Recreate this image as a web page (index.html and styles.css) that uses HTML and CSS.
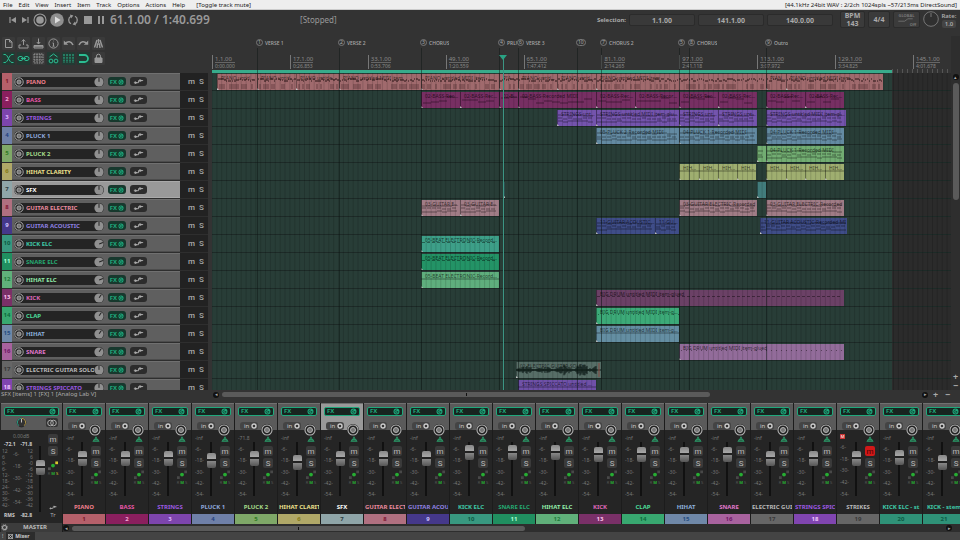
FILE: index.html
```
<!DOCTYPE html>
<html lang="en">
<head>
    <meta charset="UTF-8">
    <meta name="viewport" content="width=device-width, initial-scale=1.0">
    <title>Mixer</title>
    <link rel="stylesheet" href="styles.css">
</head>
<body>
    <svg class="sprite" aria-hidden="true">
        <symbol id="i-prev" viewBox="0 0 12 12"><path d="M3 3v6" stroke="#999" stroke-width="1.2"/><path d="M9 3v6L4 6z" fill="#999"/></symbol>
        <symbol id="i-next" viewBox="0 0 12 12"><path d="M9 3v6" stroke="#999" stroke-width="1.2"/><path d="M3 3v6l5-3z" fill="#999"/></symbol>
        <symbol id="i-rec" viewBox="0 0 14 14"><circle cx="7" cy="7" r="6" fill="none" stroke="#999" stroke-width="1.1"/><circle cx="7" cy="7" r="3.8" fill="#999"/></symbol>
        <symbol id="i-play" viewBox="0 0 14 14"><circle cx="7" cy="7" r="6.8" fill="#8f8f8f"/><path d="M5 3.6v6.8L10.6 7z" fill="#ddd"/></symbol>
        <symbol id="i-loop" viewBox="0 0 12 12"><g fill="none" stroke="#999" stroke-width="1.3"><path d="M4 9.8A4.3 4.3 0 0 1 4 2.2"/><path d="M8 2.2a4.3 4.3 0 0 1 0 7.6"/></g><path d="M3 .6l3.4 1L4 4.4zM9 11.4l-3.4-1L8 7.6z" fill="#999"/></symbol>
        <symbol id="i-stop" viewBox="0 0 12 12"><path d="M2 2h8v8H2z" fill="#999"/></symbol>
        <symbol id="i-pause" viewBox="0 0 12 12"><path d="M3 2h2v8H3zM7 2h2v8H7z" fill="#999"/></symbol>
        <symbol id="i-new" viewBox="0 0 13 13"><path d="M3.5 2.5h4L10 5v5.5H3.5zM7.5 2.5V5H10"/></symbol>
        <symbol id="i-open" viewBox="0 0 13 13"><path d="M6.5 8V3M4.8 4.5l1.7-2 1.7 2M4 8H2v3h9V8H9"/></symbol>
        <symbol id="i-save" viewBox="0 0 13 13"><path d="M6.5 1.5v5M4.8 5l1.7 2 1.7-2M2 8.5h9V11H2zM2 9.7h9"/></symbol>
        <symbol id="i-info" viewBox="0 0 13 13"><circle cx="6.5" cy="6.5" r="4.6"/><path d="M6.5 6v3.2M5.5 6h1M5.5 9.2h2M6.2 4h.6"/></symbol>
        <symbol id="i-undo" viewBox="0 0 13 13"><path d="M3 6.5C6 3.8 9 4 11 8" stroke-width="1.6"/><path d="M1.8 3.5v4.2h4.4z" fill="currentColor" stroke="none"/></symbol>
        <symbol id="i-redo" viewBox="0 0 13 13"><path d="M10 6.5C7 3.8 4 4 2 8" stroke-width="1.6"/><path d="M11.2 3.5v4.2H6.8z" fill="currentColor" stroke="none"/></symbol>
        <symbol id="i-metro" viewBox="0 0 13 13"><path d="M5 3L2.5 10.5M8 3l2.5 7.5M6.5 2v4M5 11l.5-4h2l.5 4" stroke-width="1.4"/></symbol>
        <symbol id="i-cross" viewBox="0 0 13 13"><path d="M1.5 2.5H3c3 0 4 8 7 8h1.5M1.5 10.5H3c3 0 4-8 7-8h1.5"/></symbol>
        <symbol id="i-link" viewBox="0 0 13 13"><rect x="1" y="4.5" width="5" height="4" rx="2"/><rect x="7" y="4.5" width="5" height="4" rx="2"/><path d="M4 6.5h5"/></symbol>
        <symbol id="i-grid" viewBox="0 0 13 13"><path d="M2 2h9v9H2zM2 5h9M2 8h9M5 2v9M8 2v9" stroke-dasharray="1.5 .8"/></symbol>
        <symbol id="i-env" viewBox="0 0 13 13"><path d="M2.5 5l4-3 4 3"/><circle cx="4" cy="9" r="1.9"/><circle cx="9" cy="9" r="1.9"/></symbol>
        <symbol id="i-lines" viewBox="0 0 13 13"><path d="M2 2v9M5 2v9M8 2v9M11 2v9" stroke-dasharray="2 .8"/></symbol>
        <symbol id="i-snap" viewBox="0 0 13 13"><path d="M2 3h5.5a3.5 3.5 0 0 1 0 7H2" stroke-width="1.8"/></symbol>
        <symbol id="i-lock" viewBox="0 0 13 13"><path d="M4.5 6V4.2a2 2 0 0 1 4 0V6"/><path d="M3 6h7v4.5H3z" fill="currentColor"/></symbol>
        <symbol id="i-arm" viewBox="0 0 10 10"><circle cx="5" cy="5" r="4.2" fill="#222" stroke="#b5b5b5" stroke-width=".9"/><circle cx="5" cy="5" r="2.1" fill="#777" stroke="#b5b5b5" stroke-width=".8"/></symbol>
        <symbol id="i-power" viewBox="0 0 8 8"><circle cx="4" cy="4" r="3.4" fill="#1fa97c"/><path d="M4.5 2.2a1.9 1.9 0 1 0 1.3 2.5M4 4h2" fill="none" stroke="#0b3b2c" stroke-width=".9"/></symbol>
        <symbol id="i-route" viewBox="0 0 14 7"><path d="M2 4.8h5V2.5h5" fill="none" stroke="#aaa"/><path d="M3 3l3 1.8-3 1.6zM8 .8l3.5 1.7L8 4.3z" fill="#aaa"/></symbol>
        <symbol id="i-phase" viewBox="0 0 10 8"><path d="M5 0l2 3H3zM2.5 3.5h5l2 3.2H.5z" fill="#2a9a68"/><path d="M3 5h4" stroke="#252525" stroke-width=".7"/></symbol>
        <symbol id="i-dots" viewBox="0 0 12 11"><path d="M8.5.5h3v3h-3zM.5 7h3v3h-3z" fill="#484848"/><circle cx="6" cy="5" r="2.1" fill="#27ae33"/></symbol>
        <symbol id="i-gear" viewBox="0 0 8 8"><circle cx="4" cy="4" r="2.3" fill="none" stroke="#aaa" stroke-width="1.2"/><circle cx="4" cy="4" r="3.3" fill="none" stroke="#aaa" stroke-dasharray="1.2 1.4"/></symbol>
    </svg>

    <nav class="menubar">
        <button>File</button><button>Edit</button><button>View</button><button>Insert</button><button>Item</button><button>Track</button><button>Options</button><button>Actions</button><button>Help</button>
        <span class="last-action">[Toggle track mute]</span>
        <span class="audio-status">[44.1kHz 24bit WAV : 2/2ch 1024spls ~57/213ms DirectSound]</span>
    </nav>

    <header class="transport">
        <div class="transport-buttons">
            <button class="t-skip" aria-label="Go to start"><svg><use href="#i-prev"/></svg></button>
            <button class="t-skip" aria-label="Go to end"><svg><use href="#i-next"/></svg></button>
            <button class="t-round" aria-label="Record"><svg><use href="#i-rec"/></svg></button>
            <button class="t-round" aria-label="Play"><svg><use href="#i-play"/></svg></button>
            <button class="t-loop" aria-label="Repeat"><svg><use href="#i-loop"/></svg></button>
            <button class="t-loop" aria-label="Stop"><svg><use href="#i-stop"/></svg></button>
            <button class="t-skip" aria-label="Pause"><svg><use href="#i-pause"/></svg></button>
        </div>
        <div class="position">61.1.00 / 1:40.699</div>
        <div class="play-state">[Stopped]</div>
        <div class="selection">
            <label for="sel-start">Selection:</label>
            <input id="sel-start" type="text" value="1.1.00">
            <input type="text" value="141.1.00" aria-label="Selection end">
            <input type="text" value="140.0.00" aria-label="Selection length">
        </div>
        <button class="tbox bpm">BPM<br>143</button>
        <button class="tbox sig">4/4</button>
        <button class="tbox global"><span>GLOBAL</span><svg viewBox="0 0 20 5"><path d="M1 4h8l4-3h6" fill="none" stroke="#777"/></svg><span class="off">Off</span></button>
        <svg class="rate-dial" viewBox="0 0 16 16"><circle cx="8" cy="8" r="7.3" fill="#303030" stroke="#777"/><path d="M8 2v4" stroke="#777"/></svg>
        <div class="rate"><label for="rate">Rate:</label><input id="rate" type="text" value="1.0"></div>
    </header>

    <main class="workspace">
        <section class="tcp">
            <div class="toolbar">
                <button aria-label="New"><svg><use href="#i-new"/></svg></button>
                <button aria-label="Open"><svg><use href="#i-open"/></svg></button>
                <button aria-label="Save"><svg><use href="#i-save"/></svg></button>
                <button aria-label="Info"><svg><use href="#i-info"/></svg></button>
                <button aria-label="Undo"><svg><use href="#i-undo"/></svg></button>
                <button aria-label="Redo"><svg><use href="#i-redo"/></svg></button>
                <button aria-label="Metronome"><svg><use href="#i-metro"/></svg></button>
                <button class="on" aria-label="Crossfade"><svg><use href="#i-cross"/></svg></button>
                <button class="on" aria-label="Grouping"><svg><use href="#i-link"/></svg></button>
                <button aria-label="Ripple"><svg><use href="#i-grid"/></svg></button>
                <button class="on" aria-label="Envelopes"><svg><use href="#i-env"/></svg></button>
                <button class="on" aria-label="Grid"><svg><use href="#i-lines"/></svg></button>
                <button class="on" aria-label="Snap"><svg><use href="#i-snap"/></svg></button>
                <button aria-label="Lock"><svg><use href="#i-lock"/></svg></button>
            </div>
            <div class="track-list" id="track-list"></div>
        </section>

        <section class="arrange">
            <div class="ruler" id="ruler"></div>
            <div class="lanes" id="lanes"></div>
        </section>

        <div class="vscroll">
            <button aria-label="Scroll up">&#9652;</button>
            <div class="vthumb"></div>
            <button class="zoom-btn" aria-label="Zoom in">+</button>
            <button class="zoom-btn" aria-label="Zoom out">&minus;</button>
        </div>
    </main>

    <div class="statusbar">
        <div class="status-text">SFX [items] 1 [FX] 1 [Analog Lab V]</div>
        <div class="hscroll">
            <button aria-label="Scroll left">&#9666;</button>
            <div class="track"><div class="hthumb wide"></div></div>
            <button aria-label="Scroll right">&#9656;</button>
            <button class="zoom-btn" aria-label="Zoom in">+</button>
            <button class="zoom-btn" aria-label="Zoom out">&minus;</button>
        </div>
    </div>

    <section class="mixer">
        <div class="master">
            <div class="strip-head">
                <button class="fx-slot">FX<svg><use href="#i-power"/></svg></button>
                <div class="master-top">
                    <svg class="pan" viewBox="0 0 12 12"><circle cx="6" cy="6" r="4.8" fill="#333" stroke="#222"/><path d="M3 9.5a4.7 4.7 0 0 1 3-8.2" fill="none" stroke="#2aa78c"/><path d="M6 1.3a4.7 4.7 0 0 1 3 8.2" fill="none" stroke="#b59a45"/><path d="M6 2v4" stroke="#ccc"/></svg>
                    <button class="mono" aria-label="Mono"><svg viewBox="0 0 12 8"><g fill="none" stroke="#aaa"><circle cx="4.5" cy="4" r="2.8"/><circle cx="7.5" cy="4" r="2.8"/></g></svg></button>
                </div>
            </div>
            <div class="master-body">
                <div class="meters">
                    <div class="db">0.00dB</div>
                    <div class="peak"><span>-72.1</span><span>-71.8</span></div>
                    <div class="scales">
                        <div><span>12</span><span>6</span><span>0-</span><span>6-</span><span>12-</span><span>18-</span><span>24-</span><span>30-</span><span>36-</span><span>42-</span></div>
                        <div class="mid"><span>-6-</span><span>-18-</span><span>-30-</span><span>-42-</span><span>-54-</span></div>
                        <div class="right"><span>12</span><span>6</span><span>-0</span><span>-6</span><span>-12</span><span>-18</span><span>-24</span><span>-30</span><span>-36</span><span>-42</span></div>
                    </div>
                    <div class="peak"><span>RMS</span><span>-82.8</span></div>
                </div>
                <input class="fader" type="range" min="0" max="100" value="72" aria-label="Master volume">
                <div class="strip-buttons">
                    <button class="ms">m</button>
                    <button class="ms">S</button>
                    <svg class="dots" viewBox="0 0 12 11"><path d="M8.5.5h3v3h-3z" fill="#d8c92f"/><path d="M.5 7h3v3h-3z" fill="#555"/><circle cx="6" cy="5" r="2.1" fill="#27ae33"/></svg>
                    <div class="rms">R <b>M</b> <i>S</i></div>
                    <button class="trim"><svg><use href="#i-route"/></svg>Tr</button>
                </div>
            </div>
            <div class="master-name"><svg><use href="#i-gear"/></svg><span>MASTER</span></div>
        </div>
        <div class="strips-wrap">
            <div class="strips" id="strips"></div>
            <div class="hscroll">
                <button aria-label="Scroll left">&#9666;</button>
                <div class="track"><div class="hthumb half"></div></div>
                <button aria-label="Scroll right">&#9656;</button>
            </div>
        </div>
    </section>

    <footer class="docker">
        <span>!</span>
        <button><svg viewBox="0 0 6 6"><path d="M.5.5h5v5h-5zM.5.5l5 5M5.5.5l-5 5" fill="none" stroke="#ccc" stroke-width=".8"/></svg>Mixer</button>
    </footer>

    <script src="script.js"></script>
</body>
</html>
```
FILE: styles.css
```
:root {
    --bg: #333;
    --dark: #252525;
    --green: #1fa97c;
    --row: 18px;
}

* {
    margin: 0;
    padding: 0;
    box-sizing: border-box;
}

body {
    height: 100vh;
    display: flex;
    flex-direction: column;
    overflow: hidden;
    background: var(--bg);
    color: #aaa;
    font-family: "Noto Sans", "Open Sans", sans-serif;
    font-size: 7px;
}

button,
input {
    font: inherit;
    color: inherit;
    border: 0;
    background: none;
}

svg {
    display: block;
    flex: none;
}

.sprite {
    position: absolute;
    width: 0;
    height: 0;
}

/* menu */
.menubar {
    display: flex;
    align-items: center;
    gap: 6px;
    height: 10px;
    padding: 0 3px;
    background: #eee;
    border-bottom: 1px solid #ccc;
    color: #222;
    font-size: 6px;
    line-height: 8px;
    white-space: nowrap;
}

.last-action {
    margin-left: 5px;
}

.audio-status {
    margin-left: auto;
}

/* transport */
.transport {
    display: flex;
    align-items: flex-start;
    height: 26px;
    padding: 1px 3px 0 7px;
    white-space: nowrap;
}

.transport-buttons {
    display: flex;
    height: 17px;
}

.transport-buttons button {
    display: flex;
    align-items: center;
    justify-content: center;
    width: 12px;
}

.transport-buttons .t-round {
    width: 17px;
}

.transport-buttons .t-loop {
    width: 15px;
}

.transport-buttons svg {
    width: 12px;
    height: 12px;
}

.transport-buttons .t-round svg {
    width: 14px;
    height: 14px;
}

.position {
    margin-left: 3px;
    width: 190px;
    font-size: 12px;
    font-weight: 600;
    line-height: 17px;
    color: #999;
}

.play-state {
    font-size: 8px;
    line-height: 17px;
    color: #999;
}

.selection {
    display: flex;
    align-items: center;
    gap: 3px;
    margin: 3px 7px 0 auto;
    font-weight: 700;
}

.selection label {
    font-size: 6px;
}

.selection input {
    width: 66px;
    height: 12px;
    border: 1px solid #2b2b2b;
    border-radius: 2px;
    background: #393939;
    text-align: center;
}

.tbox {
    height: 17px;
    margin-right: 3px;
    border: 1px solid #2b2b2b;
    border-radius: 2px;
    background: #3b3b3b;
    font-weight: 700;
    line-height: 8px;
}

.bpm {
    width: 25px;
}

.sig {
    width: 22px;
}

.global {
    width: 27px;
    font-size: 4px;
    line-height: 5px;
    color: #777;
}

.global svg {
    width: 19px;
    height: 4px;
    margin-left: 2px;
}

.global span {
    display: block;
}

.global .off {
    padding-right: 3px;
    text-align: right;
}

.rate-dial {
    width: 16px;
    height: 16px;
}

.rate {
    display: flex;
    flex-direction: column;
    align-items: center;
    width: 16px;
    margin: 1px 0 0 2px;
    font-size: 6px;
    font-weight: 600;
    line-height: 8px;
}

.rate input {
    width: 14px;
    height: 8px;
    border-radius: 2px;
    background: #444;
    text-align: center;
}

/* workspace */
.workspace {
    flex: 1;
    min-height: 0;
    display: flex;
}

.tcp {
    display: flex;
    flex-direction: column;
    width: 212px;
    overflow: hidden;
}

.toolbar {
    flex: none;
    display: grid;
    grid-template-columns: repeat(7, 13px);
    gap: 2px;
    align-content: start;
    height: 37px;
    padding: 1px 2px;
}

.toolbar button {
    height: 13px;
    border-radius: 1px;
    background: #3a3a3a;
    color: #999;
}

.toolbar button.on {
    background: #233a33;
    color: #2bbd92;
}

.toolbar svg {
    width: 13px;
    height: 13px;
    fill: none;
    stroke: currentColor;
    stroke-width: 1;
}

.track-list {
    flex: 1;
    overflow: hidden;
    width: 208px;
    padding-left: 2px;
    background: #222;
}

.track-row {
    display: flex;
    align-items: stretch;
    height: var(--row);
    border-bottom: 1px solid #2e2e2e;
}

.track-no {
    width: 10px;
    font-size: 6px;
    font-weight: 700;
    line-height: 17px;
    text-align: center;
}

.track-panel {
    display: flex;
    align-items: center;
    gap: 4px;
    width: 168px;
    padding-left: 2px;
    border-top: 1px solid #707070;
    border-bottom: 1px solid #4c4c4c;
    background: #5f5f5f;
}

.selected .track-panel {
    background: #999;
    border-color: #aaa;
}

.name-box {
    display: flex;
    align-items: center;
    width: 90px;
    height: 10px;
    border-radius: 5px;
    background: #242424;
}

.arm svg {
    width: 10px;
    height: 10px;
}

.track-name {
    flex: 1;
    margin-left: 2px;
    overflow: hidden;
    font-size: 6px;
    font-weight: 700;
    line-height: 10px;
    white-space: nowrap;
}

.knob {
    width: 10px;
    height: 10px;
}

.fx-btn {
    display: flex;
    align-items: center;
    justify-content: center;
    gap: 1px;
    width: 18px;
    height: 9px;
    border-radius: 3px;
    background: #17382d;
    color: var(--green);
    font-size: 6px;
    font-weight: 700;
    line-height: 8px;
}

.fx-btn svg {
    width: 6px;
    height: 6px;
}

.route-btn {
    width: 17px;
    height: 9px;
    padding: 1px 2px;
    border-radius: 3px;
    background: #2c2c2c;
}

.route-btn svg {
    width: 13px;
    height: 7px;
}

.track-ms {
    display: flex;
    align-items: center;
    gap: 4px;
    padding-left: 8px;
    font-family: Roboto, sans-serif;
    font-size: 8px;
    font-weight: 500;
    line-height: 12px;
    color: #aaa;
}

/* timeline */
.arrange {
    position: relative;
    flex: 1;
    min-width: 0;
    display: flex;
    flex-direction: column;
}

.ruler {
    position: relative;
    flex: none;
    height: 37px;
}

.region-tag {
    position: absolute;
    top: 3px;
    display: flex;
    gap: 2px;
    overflow: hidden;
    font-size: 5px;
    font-weight: 500;
    line-height: 8px;
    color: #aaa;
    white-space: nowrap;
}

.region-tag b {
    min-width: 7px;
    height: 7px;
    padding: 0 1px;
    border: 1px solid #777;
    border-radius: 4px;
    font-weight: 400;
    line-height: 5px;
    text-align: center;
}

.tick {
    position: absolute;
    top: 19px;
    height: 14px;
    padding-left: 2px;
    border-left: 1px solid #777;
    font-size: 6px;
    line-height: 8px;
    color: #8a8a8a;
}

.tick span {
    display: block;
    height: 8px;
    border-bottom: 1px solid #666;
}

.tick small {
    display: block;
    font-size: 5px;
    line-height: 6px;
}

.loop-bar {
    position: absolute;
    left: 0;
    width: 92%;
    bottom: 0;
    height: 3px;
    background: #38ab8b;
}

.small-ticks {
    position: absolute;
    inset: auto 0 0 92%;
    height: 4px;
    background: repeating-linear-gradient(to right, #555 0 1px, transparent 1px 5px);
}

.lanes {
    position: relative;
    flex: 1;
    overflow: hidden;
    background: linear-gradient(to right, #283d37 92%, #2b2b2b 92%);
}

.lane {
    position: relative;
    height: var(--row);
    border-bottom: 1px solid #1d2a27;
}

.clip {
    position: absolute;
    top: 1px;
    height: 16px;
    overflow: hidden;
    color: rgba(0, 0, 0, .65);
    box-shadow: inset 1px 0 rgba(0, 0, 0, .3);
    font-size: 5px;
    line-height: 8px;
    text-indent: 4px;
    text-overflow: ellipsis;
    white-space: nowrap;
}

.clip::after {
    content: "";
    position: absolute;
    left: 0;
    bottom: 0;
    border: 1px solid;
    border-color: transparent transparent #ccc #ccc;
}

.clip svg {
    position: absolute;
    inset: 0;
    width: 100%;
    height: 100%;
}

.grid {
    position: absolute;
    inset: 0;
    width: 100%;
    height: 100%;
    pointer-events: none;
}

.region-line {
    position: absolute;
    top: 12px;
    bottom: 0;
    width: 1px;
    background: rgba(10, 20, 18, .45);
}

.playhead {
    position: absolute;
    top: 19px;
    bottom: 0;
    width: 1px;
    background: #3c9583;
}

.playhead::before {
    content: "";
    position: absolute;
    left: -4px;
    border: 4px solid transparent;
    border-top: 5px solid #2aa384;
    border-bottom: 0;
}

/* scrollbars */
.vscroll {
    display: flex;
    flex-direction: column;
    align-items: center;
    width: 9px;
    padding-top: 38px;
    background: #2e2e2e;
}

.vscroll button,
.hscroll button {
    width: 6px;
    height: 6px;
    border-radius: 3px;
    background: #111;
    color: #aaa;
    font-size: 5px;
    line-height: 5px;
}

.vscroll .zoom-btn,
.hscroll .zoom-btn {
    width: 9px;
    height: 9px;
    background: none;
    font-size: 9px;
    font-weight: 700;
    line-height: 8px;
}

.vthumb {
    width: 6px;
    height: 37%;
    margin: 3px 0 auto;
    border-radius: 3px;
    background: #5a5a5a;
}

.statusbar {
    display: flex;
    height: 13px;
    font-size: 6px;
    line-height: 8px;
}

.status-text {
    width: 213px;
    padding-left: 1px;
}

.hscroll {
    flex: 1;
    display: flex;
    align-items: center;
    gap: 3px;
    height: 9px;
    padding-right: 8px;
}

.hscroll .track {
    flex: 1;
}

.hthumb {
    position: relative;
    height: 5px;
    border-radius: 3px;
    background: #5a5a5a;
}

.hthumb::after {
    content: "";
    position: absolute;
    left: 50%;
    top: 1px;
    width: 1px;
    height: 3px;
    background: #111;
}

.hthumb.wide {
    width: 70%;
}

.hthumb.half {
    width: 52%;
}

/* mixer */
.mixer {
    display: flex;
    height: 129px;
    background: #2e2e2e;
}

.strips-wrap {
    flex: 1;
    min-width: 0;
}

.strips-wrap .hscroll {
    height: 8px;
}

.strips {
    display: flex;
    height: 121px;
    overflow: hidden;
}

.strip {
    position: relative;
    flex: none;
    display: flex;
    flex-direction: column;
    width: 43px;
    border-right: 1px solid #1c1c1c;
    background: var(--dark);
}

.strip-head {
    height: 27px;
    padding: 3px 3px 0;
    border-top: 1px solid #707070;
    background: #5a5a5a;
}

.selected .strip-head {
    background: #999;
}

.fx-slot {
    display: flex;
    align-items: center;
    justify-content: space-between;
    width: 100%;
    height: 9px;
    padding: 0 2px;
    border: 1px solid var(--green);
    border-radius: 2px;
    background: #17241f;
    color: var(--green);
    font-size: 6px;
    font-weight: 700;
    line-height: 7px;
}

.fx-slot svg {
    width: 7px;
    height: 7px;
}

.in-btn {
    display: flex;
    align-items: center;
    justify-content: space-between;
    width: 18px;
    height: 8px;
    margin: 6px 0 0 2px;
    padding: 0 1px 0 4px;
    border-radius: 3px;
    background: #444;
    color: #ccc;
    font-size: 6px;
    line-height: 7px;
}

.in-btn svg {
    width: 6px;
    height: 6px;
}

/* record arm sits over the edge between head and fader area */
.strip-arm {
    position: absolute;
    right: 4px;
    top: 21px;
    width: 12px;
    height: 12px;
    border-radius: 6px;
    background: var(--dark);
}

.strip-arm svg {
    width: 12px;
    height: 12px;
}

.strip-body {
    display: grid;
    grid-template-columns: 11px 10px 12px;
    height: 72px;
    padding: 4px 0 0 3px;
}

.scale {
    height: 64px;
    display: flex;
    flex-direction: column;
    justify-content: space-between;
    font-size: 5px;
    line-height: 8px;
    color: #777;
    white-space: nowrap;
}

.clip-led {
    width: 5px;
    height: 5px;
    background: #c33;
    color: #fff;
    font-size: 4px;
    line-height: 5px;
    text-align: center;
}

.fader {
    appearance: none;
    writing-mode: vertical-lr;
    direction: rtl;
    width: 10px;
    height: 54px;
    margin-top: 8px;
    background: linear-gradient(to right, transparent 4px, #111 4px 6px, transparent 6px);
}

.fader::-webkit-slider-thumb {
    appearance: none;
    width: 9px;
    height: 15px;
    border-radius: 2px;
    background: linear-gradient(#888, #aaa 42%, #222 42% 54%, #888 54%, #555);
}

.strip-buttons {
    display: flex;
    flex-direction: column;
    align-items: center;
    margin-left: 3px;
    padding-top: 2px;
    width: 12px;
}

.phase {
    width: 8px;
    height: 7px;
    margin-bottom: 3px;
}

.ms {
    width: 10px;
    height: 10px;
    margin-bottom: 2px;
    border-radius: 2px;
    background: #3a3a3a;
    color: #bbb;
    font-family: Roboto, sans-serif;
    font-size: 8px;
    line-height: 9px;
}

.ms.muted {
    background: #d01818;
    color: #400;
}

.dots {
    width: 12px;
    height: 10px;
}

.rms {
    font-size: 4px;
    line-height: 6px;
    color: #555;
    white-space: nowrap;
}

.rms b {
    color: #27ae33;
}

.rms i {
    font-style: normal;
    color: #d8c92f;
}

.strip-name {
    display: flex;
    height: 12px;
    margin: 0 1px;
    overflow: hidden;
    font-size: 6px;
    font-weight: 700;
    line-height: 10px;
    white-space: nowrap;
}

.strip-name span {
    margin: 0 auto;
}

.strip-no {
    height: 10px;
    font-size: 6px;
    font-weight: 700;
    line-height: 10px;
    text-align: center;
}

.master {
    display: flex;
    flex-direction: column;
    width: 63px;
    padding-left: 1px;
    border-right: 1px solid #1c1c1c;
    background: var(--dark);
}

.master-top {
    display: flex;
    align-items: center;
    justify-content: space-between;
    padding: 1px 1px 0 12px;
}

.pan {
    width: 11px;
    height: 11px;
}

.mono {
    width: 12px;
    height: 9px;
    border-radius: 2px;
    background: #333;
}

.mono svg {
    width: 12px;
    height: 8px;
}

.master-body {
    flex: 1;
    display: flex;
    padding: 2px 2px 0 1px;
}

.meters {
    width: 31px;
    font-size: 5px;
    line-height: 8px;
    color: #777;
}

.db {
    padding-left: 11px;
}

.peak {
    display: flex;
    justify-content: space-between;
    padding: 0 1px 0 2px;
    font-weight: 700;
    color: #ccc;
}

.scales {
    display: flex;
    justify-content: space-between;
    height: 60px;
    margin-bottom: 3px;
}

.scales div {
    display: flex;
    flex-direction: column;
    line-height: 6px;
}

.scales .mid {
    justify-content: space-between;
    padding: 3px 0;
}

.scales .right {
    text-align: right;
}

.master .fader {
    height: 66px;
    margin-top: 14px;
    margin-left: 2px;
}

.master .strip-buttons {
    margin-left: 2px;
}

.master .dots {
    margin-top: 3px;
}

.trim {
    display: flex;
    flex-direction: column;
    align-items: center;
    margin-top: 27px;
    font-size: 6px;
    line-height: 8px;
}

.trim svg {
    width: 10px;
    height: 7px;
}

.master-name {
    display: flex;
    align-items: center;
    height: 9px;
    background: #3c3c3c;
    font-size: 6px;
    font-weight: 700;
    line-height: 9px;
    color: #bbb;
}

.master-name svg {
    width: 7px;
    height: 7px;
}

.master-name span {
    margin: 0 auto;
}

/* docker */
.docker {
    display: flex;
    gap: 3px;
    height: 8px;
    padding-left: 2px;
    background: #444;
    color: #ccc;
    font-size: 5px;
    line-height: 8px;
}

.docker button {
    display: flex;
    align-items: center;
    gap: 2px;
    padding: 0 5px 0 2px;
    background: #2c2c2c;
    font-weight: 700;
}

.docker svg {
    width: 5px;
    height: 5px;
}
```
FILE: script.js
```
// clip positions are in timeline units, the view is SPAN units wide
const SPAN = 739;
const BAR = 4.868;

const tracks = [
    { name: "PIANO", color: "#b5606a", no: "#7a1828", text: "#ee7f8c", fader: 78, clip: "#a06a6d", style: "piano", label: "PIANO untitled MIDI item", runs: [[5, 45, 84, 127, 209, 287, 306, 345, 384, 554, 574, 671]] },
    { name: "BASS", color: "#8a1f5e", no: "#f3a9d6", text: "#e455a5", fader: 78, clip: "#772f63", style: "steps", label: "02-BASS-Recorded MIDI", runs: [[209, 248, 287, 306, 384, 423, 467, 506, 545], [554, 593, 632]] },
    { name: "STRINGS", color: "#7d45ad", no: "#dcb5ff", text: "#9a5ae0", fader: 78, clip: "#7454ad", style: "notes", label: "STRINGS untitled MIDI item-glued", runs: [[345, 384, 467, 506, 545], [554, 634]] },
    { name: "PLUCK 1", color: "#6f80a8", no: "#24407f", text: "#8fa8dc", fader: 72, clip: "#638aa2", style: "notes", label: "04-PLUCK 1-Recorded MIDI", first: "05-PLUCK 2-Recorded MIDI", runs: [[384, 467, 545], [554, 632]] },
    { name: "PLUCK 2", color: "#7fa868", no: "#2f7a24", text: "#a5dc8a", fader: 78, clip: "#72ad72", style: "notes", label: "04-PLUCK 1-Recorded MIDI", runs: [[545, 554, 632]] },
    { name: "HIHAT CLARITY", color: "#b0a868", no: "#857a18", text: "#ece08c", fader: 67, clip: "#9fae70", style: "flat", label: "HIH...", runs: [[467, 487, 506, 525, 544], [554, 574, 593, 613, 632]] },
    { name: "SFX", color: "#8fa5a8", no: "#2c3c40", text: "#ffffff", fader: 78, clip: "#427c7c", style: "none", label: "", runs: [[292, 293], [545, 554]], selected: true },
    { name: "GUITAR ELECTRIC", color: "#b07080", no: "#7f1834", text: "#e88a9e", fader: 78, clip: "#a07c86", style: "notes", label: "03-GUITAR ELECTRIC-Recorded", runs: [[209, 248, 287], [467, 545], [554, 632]] },
    { name: "GUITAR ACOUSTIC", color: "#45388a", no: "#cfc4ff", text: "#8d80e0", fader: 78, clip: "#3f4d88", style: "notes", label: "11-GUITAR ACOUSTIC-Recorded MI", runs: [[384, 443, 467], [548, 635]] },
    { name: "KICK ELC", color: "#389880", no: "#0c5a44", text: "#3fc9a8", fader: 93, clip: "#3d9f88", style: "dash", label: "05-BEAT ELECTRONIC-Recorde...", runs: [[209, 287]], pan: 70 },
    { name: "SNARE ELC", color: "#208f60", no: "#a8ffd8", text: "#24a871", fader: 93, clip: "#239366", style: "dash", label: "05-BEAT ELECTRONIC-Recorde...", runs: [[209, 287]], pan: 70 },
    { name: "HIHAT ELC", color: "#60b07a", no: "#1f7a3c", text: "#92eba8", fader: 93, clip: "#5fae7d", style: "flat", label: "05-BEAT ELECTRONIC-Recorde...", runs: [[209, 287]], pan: 70 },
    { name: "KICK", color: "#7a3068", no: "#ffc4ee", text: "#dc68b8", fader: 86, clip: "#6b4166", style: "dash", label: "BIG DRUM untitled MIDI item-glued", runs: [[384, 632]], pan: 35 },
    { name: "CLAP", color: "#38a870", no: "#0c6c3a", text: "#4cdc98", fader: 86, clip: "#3caa78", style: "dots", label: "BIG DRUM untitled MIDI item-gl...", runs: [[384, 467]], pan: 35 },
    { name: "HIHAT", color: "#6f88a8", no: "#244c80", text: "#8cb0dc", fader: 86, clip: "#648ea2", style: "flat", label: "BIG DRUM untitled MIDI item-gl...", runs: [[384, 467]], pan: 35 },
    { name: "SNARE", color: "#a8629e", no: "#701868", text: "#e078cc", fader: 88, clip: "#926c9a", style: "dots", label: "BIG DRUM untitled MIDI item-glued", runs: [[467, 632]], pan: 35 },
    { name: "ELECTRIC GUITAR SOLO", color: "#666666", no: "#383838", text: "#b8b8b8", fader: 78, clip: "#576e67", style: "wave", label: "02-ELECTRIC GUITAR SOLO", runs: [[304, 389]] },
    { name: "STRINGS SPICCATO", color: "#8045b0", no: "#f0c8ff", text: "#9a58e0", fader: 78, clip: "#6f51a8", style: "flat", label: "STRINGS SPICCATO untitled MIDI", runs: [[306, 384]] },
    { name: "STRIKES", color: "#666666", no: "#383838", text: "#b8b8b8", fader: 78, muted: true },
    { name: "KICK ELC - st", color: "#2f9278", no: "#0c5a44", text: "#3fc9a8", fader: 80 },
    { name: "KICK - stem", color: "#2f9278", no: "#0c5a44", text: "#3fc9a8", fader: 67 }
];

const regions = [
    [45, "1", "VERSE 1"], [127, "2", "VERSE 2"], [209, "3", "CHORUS"], [287, "4", "PRLU", 19],
    [306, "6", "VERSE 3"], [365, "10", ""], [389, "7", "CHORUS 2"], [467, "5", ""], [477, "8", "CHORUS"], [554, "9", "Outro"]
];

const times = ["0:00.000", "0:26.853", "0:53.706", "1:20.559", "1:47.412", "2:14.265", "2:41.118", "3:07.972", "3:34.825", "4:01.678"];

let seed = 7;
function rnd() {
    seed = (seed * 16807) % 2147483647;
    return seed / 2147483647;
}

function pct(v) {
    return (v / SPAN * 100).toFixed(3) + "%";
}

// small drawing of the notes that a clip holds
function notes(style, w) {
    let d = "";
    let x;
    if (style === "piano") {
        let low = "";
        for (x = 1; x < w - 1; x += 2) {
            d += `M${x} ${5 + Math.floor(rnd() * 3)}h${1 + Math.floor(rnd() * 2)}`;
            if (rnd() > 0.5) low += `M${x} 10v5`;
        }
        return `<path d="${d}" stroke="#2a1416"/><path d="${low}" stroke="#6b4145"/>`;
    }
    if (style === "steps") {
        for (x = 2; x < w - 8; x += 8) d += `M${x} ${5 + Math.floor(rnd() * 7)}h8`;
    } else if (style === "notes") {
        for (x = 1; x < w - 5; x += 5) {
            d += `M${x} ${5 + Math.floor(rnd() * 2)}h5M${x} ${8 + Math.floor(rnd() * 2)}h4M${x} ${11 + Math.floor(rnd() * 2)}h5`;
        }
    } else if (style === "flat") {
        d = `M0 7h${w}`;
    } else if (style === "dash") {
        for (x = 1; x < w - 3; x += 5) d += `M${x} 6.5h3`;
    } else if (style === "dots") {
        for (x = 2; x < w; x += 5) d += `M${x} 6.5h1`;
    } else if (style === "wave") {
        d = `M0 8h${w}`;
        for (x = 1; x < w - 4; x += 1) {
            const a = 0.5 + rnd() * (x > 45 ? 6 : 3.5) * Math.abs(Math.sin(x / 6));
            d += `M${x} ${(8 - a).toFixed(1)}v${(a * 2).toFixed(1)}`;
        }
        return `<path d="${d}" stroke="#0d1a17"/><path d="M${w - 2} 1v14" stroke="#8a4a42"/>`;
    }
    return `<path d="${d}" stroke="rgba(0,0,0,.5)" stroke-width=".8"/>`;
}

function knob(angle) {
    return `<svg class="knob" viewBox="0 0 10 10"><circle cx="5" cy="5" r="4.6" fill="#909090"/><path d="M5 .8v4" stroke="#222" transform="rotate(${angle} 5 5)"/></svg>`;
}

const list = document.getElementById("track-list");
const lanes = document.getElementById("lanes");
const strips = document.getElementById("strips");
const ruler = document.getElementById("ruler");

let rows = "";
let laneHtml = "";
let stripHtml = "";

tracks.forEach((t, i) => {
    const sel = t.selected ? " selected" : "";

    if (t.runs) {
        rows += `
            <div class="track-row${sel}">
                <div class="track-no" style="background:${t.color};color:${t.no}">${i + 1}</div>
                <div class="track-panel">
                    <div class="name-box">
                        <button class="arm" aria-label="Record arm"><svg><use href="#i-arm"/></svg></button>
                        <span class="track-name" style="color:${t.text}">${t.name}</span>
                        ${knob(t.pan || 0)}
                    </div>
                    <button class="fx-btn">FX<svg><use href="#i-power"/></svg></button>
                    <button class="route-btn" aria-label="Routing"><svg><use href="#i-route"/></svg></button>
                </div>
                <div class="track-ms"><button>m</button><button>S</button></div>
            </div>`;

        laneHtml += `<div class="lane">`;
        t.runs.forEach((run, r) => {
            for (let k = 0; k < run.length - 1; k++) {
                const w = run[k + 1] - run[k];
                const label = r + k === 0 && t.first ? t.first : t.label;
                laneHtml += `<div class="clip" style="left:${pct(run[k])};width:${pct(w)};background-color:${t.clip}">${w > 12 ? label : ""}<svg viewBox="0 0 ${w} 16" preserveAspectRatio="none">${notes(t.style, w)}</svg></div>`;
            }
        });
        laneHtml += `</div>`;
    }

    stripHtml += `
        <div class="strip${sel}">
            <div class="strip-head">
                <button class="fx-slot">FX<svg><use href="#i-power"/></svg></button>
                <button class="in-btn">in<svg viewBox="0 0 6 6"><circle cx="3" cy="3" r="2" fill="#333" stroke="#ccc" stroke-width="1.4"/></svg></button>
            </div>
            <button class="strip-arm" aria-label="Record arm"><svg><use href="#i-arm"/></svg></button>
            <div class="strip-body">
                <div class="scale">${t.muted ? '<span class="clip-led">M</span>' : `<span>${i === 4 ? "-71.8" : "-inf"}</span>`}<span>-6-</span><span>-18-</span><span>-30-</span><span>-42-</span><span>-54-</span></div>
                <input class="fader" type="range" min="0" max="100" value="${t.fader}" aria-label="${t.name} volume">
                <div class="strip-buttons">
                    <svg class="phase"><use href="#i-phase"/></svg>
                    <button class="ms${t.muted ? " muted" : ""}">m</button>
                    <button class="ms">S</button>
                    <svg class="dots"><use href="#i-dots"/></svg>
                    <div class="rms">R <b>M</b> S</div>
                </div>
            </div>
            <div class="strip-name" style="color:${t.text}"><span>${t.name}</span></div>
            <div class="strip-no" style="background:${t.color};color:${t.no}">${i + 1}</div>
        </div>`;
});

// bar lines over the clips
let bars = "";
for (let x = 0; x < SPAN; x += BAR) {
    bars += `M${x.toFixed(1)} 0v400`;
}
laneHtml += `<svg class="grid" viewBox="0 0 ${SPAN} 400" preserveAspectRatio="none"><path d="${bars}" stroke="rgba(0,0,0,.16)"/></svg>`;

list.innerHTML = rows;
lanes.innerHTML = laneHtml;
strips.innerHTML = stripHtml;

let rulerHtml = "";
let overlay = "";
times.forEach((time, i) => {
    rulerHtml += `<div class="tick" style="left:${pct(i * BAR * 16)}"><span>${i * 16 + 1}.1.00</span><small>${time}</small></div>`;
});
regions.forEach(([x, no, name, w]) => {
    rulerHtml += `<div class="region-tag" style="left:${pct(x - 1)};${w ? `width:${pct(w)}` : ""}"><b>${no}</b>${name}</div>`;
    overlay += `<div class="region-line" style="left:${pct(x)}"></div>`;
});
rulerHtml += `<div class="small-ticks"></div><div class="loop-bar"></div>`;
overlay += `<div class="playhead" style="left:${pct(291.5)}"></div>`;

ruler.innerHTML = rulerHtml;
ruler.parentElement.insertAdjacentHTML("beforeend", overlay);
```
